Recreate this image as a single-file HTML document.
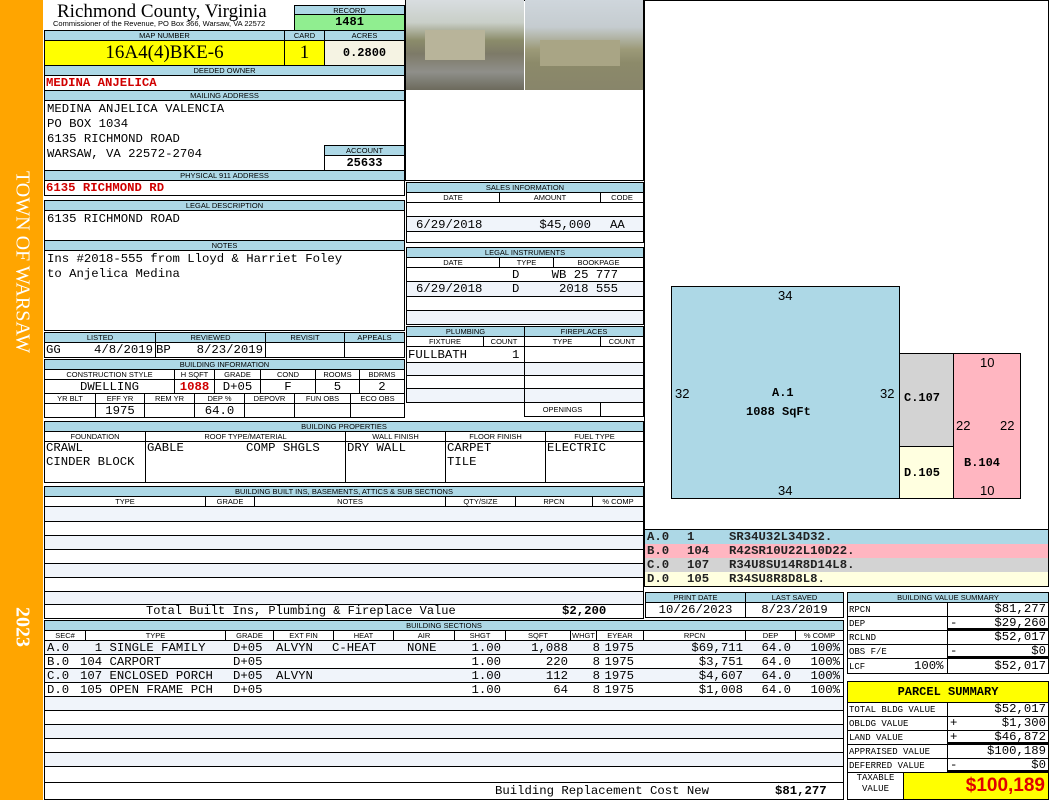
<!DOCTYPE html>
<html><head><meta charset="utf-8">
<style>
*{margin:0;padding:0;box-sizing:border-box}
body{width:1050px;height:800px;position:relative;background:#fff;overflow:hidden;font-family:"Liberation Mono",monospace;font-size:12.3px;color:#000}
div{position:absolute}
.h{background:#add8e6;border:1px solid #000;font:7.5px/9px "Liberation Sans",Arial,sans-serif;text-align:center;white-space:nowrap;overflow:hidden}
.b{border:1px solid #000}
.m{font-family:"Liberation Mono",monospace;font-size:12.3px;white-space:pre;line-height:14px}
.r{text-align:right}.c{text-align:center}
.alt{background:#f0f4fa}
.red{color:#d00000;font-weight:bold}
.sk{font:13px "Liberation Sans",Arial,sans-serif}
.sb{font:bold 12px "Liberation Mono",monospace}
.s9{font-size:9px}
</style></head><body>
<div style="left:0;top:0;width:43px;height:800px;background:#ffa500"></div>
<div style="left:22px;top:262px;transform:translate(-50%,-50%) rotate(90deg);color:#fff;font:20px 'Liberation Serif',serif;white-space:nowrap">TOWN OF WARSAW</div>
<div style="left:22px;top:627px;transform:translate(-50%,-50%) rotate(90deg);color:#fff;font:bold 20px 'Liberation Serif',serif;white-space:nowrap">2023</div>

<!-- title -->
<div style="left:57px;top:1px;font:19px 'Liberation Serif',serif;white-space:nowrap">Richmond County, Virginia</div>
<div style="left:53px;top:19px;font:7.5px 'Liberation Sans',sans-serif;white-space:nowrap">Commissioner of the Revenue, PO Box 366, Warsaw, VA 22572</div>
<div class="h" style="left:294px;top:5px;width:111px;height:10px">RECORD</div>
<div class="b" style="left:294px;top:14px;width:111px;height:17px;background:#90ee90;font:bold 12px 'Liberation Mono';text-align:center;line-height:15px">1481</div>
<div class="h" style="left:44px;top:30px;width:241px;height:11px">MAP NUMBER</div>
<div class="h" style="left:284px;top:30px;width:41px;height:11px">CARD</div>
<div class="h" style="left:324px;top:30px;width:81px;height:11px">ACRES</div>
<div class="b" style="left:44px;top:40px;width:241px;height:26px;background:#ffff00;font:19px 'Liberation Serif',serif;text-align:center;line-height:24px">16A4(4)BKE-6</div>
<div class="b" style="left:284px;top:40px;width:41px;height:26px;background:#ffff00;font:19px 'Liberation Serif',serif;text-align:center;line-height:24px">1</div>
<div class="b" style="left:324px;top:40px;width:81px;height:26px;background:#f5f3e3;font:bold 12px 'Liberation Mono';text-align:center;line-height:24px">0.2800</div>
<div class="h" style="left:44px;top:65px;width:361px;height:11px">DEEDED OWNER</div>
<div class="b" style="left:44px;top:75px;width:361px;height:16px"></div>
<div class="m red" style="left:46px;top:76px">MEDINA ANJELICA</div>
<div class="h" style="left:44px;top:90px;width:361px;height:11px">MAILING ADDRESS</div>
<div class="b" style="left:44px;top:100px;width:361px;height:71px"></div>
<div class="m" style="left:47px;top:102px;line-height:15px">MEDINA ANJELICA VALENCIA
PO BOX 1034
6135 RICHMOND ROAD
WARSAW, VA 22572-2704</div>
<div class="h" style="left:324px;top:145px;width:81px;height:11px">ACCOUNT</div>
<div class="b" style="left:324px;top:155px;width:81px;height:16px;font:bold 12px 'Liberation Mono';text-align:center;line-height:14px">25633</div>
<div class="h" style="left:44px;top:170px;width:361px;height:11px">PHYSICAL 911 ADDRESS</div>
<div class="b" style="left:44px;top:180px;width:361px;height:16px"></div>
<div class="m red" style="left:46px;top:181px">6135 RICHMOND RD</div>
<div class="h" style="left:44px;top:200px;width:361px;height:11px">LEGAL DESCRIPTION</div>
<div class="b" style="left:44px;top:210px;width:361px;height:31px"></div>
<div class="m" style="left:47px;top:212px">6135 RICHMOND ROAD</div>
<div class="h" style="left:44px;top:240px;width:361px;height:11px">NOTES</div>
<div class="b" style="left:44px;top:250px;width:361px;height:81px"></div>
<div class="m" style="left:47px;top:252px;line-height:15px">Ins #2018-555 from Lloyd &amp; Harriet Foley
to Anjelica Medina</div>

<!-- listed -->
<div class="h" style="left:44px;top:332px;width:112px;height:11px">LISTED</div>
<div class="h" style="left:155px;top:332px;width:111px;height:11px">REVIEWED</div>
<div class="h" style="left:265px;top:332px;width:80px;height:11px">REVISIT</div>
<div class="h" style="left:344px;top:332px;width:61px;height:11px">APPEALS</div>
<div class="b" style="left:44px;top:342px;width:112px;height:16px"></div>
<div class="b" style="left:155px;top:342px;width:111px;height:16px"></div>
<div class="b" style="left:265px;top:342px;width:80px;height:16px"></div>
<div class="b" style="left:344px;top:342px;width:61px;height:16px"></div>
<div class="m" style="left:46px;top:343px">GG</div>
<div class="m r" style="left:80px;top:343px;width:73px">4/8/2019</div>
<div class="m" style="left:156px;top:343px">BP</div>
<div class="m r" style="left:180px;top:343px;width:83px">8/23/2019</div>

<!-- building information -->
<div class="h" style="left:44px;top:359px;width:361px;height:11px">BUILDING INFORMATION</div>
<div class="h" style="left:44px;top:369px;width:131px;height:11px;background:#fff">CONSTRUCTION STYLE</div>
<div class="h" style="left:174px;top:369px;width:41px;height:11px;background:#fff">H SQFT</div>
<div class="h" style="left:214px;top:369px;width:47px;height:11px;background:#fff">GRADE</div>
<div class="h" style="left:260px;top:369px;width:56px;height:11px;background:#fff">COND</div>
<div class="h" style="left:315px;top:369px;width:45px;height:11px;background:#fff">ROOMS</div>
<div class="h" style="left:359px;top:369px;width:46px;height:11px;background:#fff">BDRMS</div>
<div class="b m c" style="left:44px;top:379px;width:131px;height:15px">DWELLING</div>
<div class="b m c red" style="left:174px;top:379px;width:41px;height:15px">1088</div>
<div class="b m c" style="left:214px;top:379px;width:47px;height:15px">D+05</div>
<div class="b m c" style="left:260px;top:379px;width:56px;height:15px">F</div>
<div class="b m c" style="left:315px;top:379px;width:45px;height:15px">5</div>
<div class="b m c" style="left:359px;top:379px;width:46px;height:15px">2</div>
<div class="h" style="left:44px;top:393px;width:52px;height:11px;background:#fff">YR BLT</div>
<div class="h" style="left:95px;top:393px;width:50px;height:11px;background:#fff">EFF YR</div>
<div class="h" style="left:144px;top:393px;width:51px;height:11px;background:#fff">REM YR</div>
<div class="h" style="left:194px;top:393px;width:51px;height:11px;background:#fff">DEP %</div>
<div class="h" style="left:244px;top:393px;width:51px;height:11px;background:#fff">DEPOVR</div>
<div class="h" style="left:294px;top:393px;width:57px;height:11px;background:#fff">FUN OBS</div>
<div class="h" style="left:350px;top:393px;width:55px;height:11px;background:#fff">ECO OBS</div>
<div class="b" style="left:44px;top:403px;width:52px;height:15px"></div>
<div class="b m c" style="left:95px;top:403px;width:50px;height:15px">1975</div>
<div class="b" style="left:144px;top:403px;width:51px;height:15px"></div>
<div class="b m c" style="left:194px;top:403px;width:51px;height:15px">64.0</div>
<div class="b" style="left:244px;top:403px;width:51px;height:15px"></div>
<div class="b" style="left:294px;top:403px;width:57px;height:15px"></div>
<div class="b" style="left:350px;top:403px;width:55px;height:15px"></div>

<!-- photos -->
<div class="b" style="left:405px;top:0;width:239px;height:181px"></div>
<div style="left:406px;top:0;width:118px;height:90px;background:linear-gradient(180deg,#d8dde0 0%,#c9cfc8 25%,#8b8c6a 45%,#7d7a68 60%,#8f8f8a 80%,#6c6a5c 100%)"></div>
<div style="left:425px;top:30px;width:60px;height:30px;background:#b8b49a"></div>
<div style="left:525px;top:0;width:118px;height:90px;background:linear-gradient(180deg,#cfd6dc 0%,#c5ccd0 30%,#9c9a78 55%,#8c8a6a 70%,#88856a 100%)"></div>
<div style="left:540px;top:40px;width:80px;height:26px;background:#a9a585"></div>

<!-- sales -->
<div class="h" style="left:406px;top:182px;width:238px;height:11px">SALES INFORMATION</div>
<div class="h" style="left:406px;top:192px;width:94px;height:11px;background:#fff">DATE</div>
<div class="h" style="left:499px;top:192px;width:102px;height:11px;background:#fff">AMOUNT</div>
<div class="h" style="left:600px;top:192px;width:44px;height:11px;background:#fff">CODE</div>
<div class="b" style="left:406px;top:202px;width:238px;height:15px"></div>
<div class="b alt" style="left:406px;top:216px;width:238px;height:16px"></div>
<div class="b" style="left:406px;top:231px;width:238px;height:12px"></div>
<div class="m" style="left:416px;top:218px">6/29/2018</div>
<div class="m r" style="left:520px;top:218px;width:71px">$45,000</div>
<div class="m" style="left:610px;top:218px">AA</div>
<div class="h" style="left:406px;top:247px;width:238px;height:11px">LEGAL INSTRUMENTS</div>
<div class="h" style="left:406px;top:257px;width:94px;height:11px;background:#fff">DATE</div>
<div class="h" style="left:499px;top:257px;width:55px;height:11px;background:#fff">TYPE</div>
<div class="h" style="left:553px;top:257px;width:91px;height:11px;background:#fff">BOOKPAGE</div>
<div class="b" style="left:406px;top:267px;width:238px;height:15px"></div>
<div class="b alt" style="left:406px;top:281px;width:238px;height:16px"></div>
<div class="b" style="left:406px;top:296px;width:238px;height:15px"></div>
<div class="b alt" style="left:406px;top:310px;width:238px;height:15px"></div>
<div class="m" style="left:512px;top:268px">D
D</div>
<div class="m r" style="left:540px;top:268px;width:78px">WB 25 777
2018 555</div>
<div class="m" style="left:416px;top:282px">6/29/2018</div>

<!-- plumbing -->
<div class="h" style="left:406px;top:326px;width:119px;height:11px">PLUMBING</div>
<div class="h" style="left:524px;top:326px;width:120px;height:11px">FIREPLACES</div>
<div class="h" style="left:406px;top:336px;width:78px;height:11px;background:#fff">FIXTURE</div>
<div class="h" style="left:483px;top:336px;width:42px;height:11px;background:#fff">COUNT</div>
<div class="h" style="left:524px;top:336px;width:77px;height:11px;background:#fff">TYPE</div>
<div class="h" style="left:600px;top:336px;width:44px;height:11px;background:#fff">COUNT</div>
<div class="b" style="left:406px;top:346px;width:119px;height:17px"></div>
<div class="b alt" style="left:406px;top:362px;width:119px;height:14px"></div>
<div class="b" style="left:406px;top:375px;width:119px;height:14px"></div>
<div class="b alt" style="left:406px;top:388px;width:119px;height:15px"></div>
<div class="b" style="left:524px;top:346px;width:120px;height:17px"></div>
<div class="b alt" style="left:524px;top:362px;width:120px;height:14px"></div>
<div class="b" style="left:524px;top:375px;width:120px;height:14px"></div>
<div class="b alt" style="left:524px;top:388px;width:120px;height:15px"></div>
<div class="b" style="left:524px;top:402px;width:77px;height:15px;font:7.5px/13px 'Liberation Sans';text-align:center">OPENINGS</div>
<div class="b" style="left:600px;top:402px;width:44px;height:15px"></div>
<div class="m" style="left:408px;top:348px">FULLBATH</div>
<div class="m" style="left:512px;top:348px">1</div>

<!-- building properties -->
<div class="h" style="left:44px;top:421px;width:600px;height:11px">BUILDING PROPERTIES</div>
<div class="h" style="left:44px;top:431px;width:102px;height:11px;background:#fff">FOUNDATION</div>
<div class="h" style="left:145px;top:431px;width:201px;height:11px;background:#fff">ROOF TYPE/MATERIAL</div>
<div class="h" style="left:345px;top:431px;width:101px;height:11px;background:#fff">WALL FINISH</div>
<div class="h" style="left:445px;top:431px;width:101px;height:11px;background:#fff">FLOOR FINISH</div>
<div class="h" style="left:545px;top:431px;width:99px;height:11px;background:#fff">FUEL TYPE</div>
<div class="b" style="left:44px;top:441px;width:102px;height:42px"></div>
<div class="b" style="left:145px;top:441px;width:201px;height:42px"></div>
<div class="b" style="left:345px;top:441px;width:101px;height:42px"></div>
<div class="b" style="left:445px;top:441px;width:101px;height:42px"></div>
<div class="b" style="left:545px;top:441px;width:99px;height:42px"></div>
<div class="m" style="left:46px;top:441px">CRAWL
CINDER BLOCK</div>
<div class="m" style="left:147px;top:441px">GABLE</div>
<div class="m" style="left:246px;top:441px">COMP SHGLS</div>
<div class="m" style="left:347px;top:441px">DRY WALL</div>
<div class="m" style="left:447px;top:441px">CARPET
TILE</div>
<div class="m" style="left:547px;top:441px">ELECTRIC</div>

<!-- built ins -->
<div class="h" style="left:44px;top:486px;width:600px;height:11px">BUILDING BUILT INS, BASEMENTS, ATTICS &amp; SUB SECTIONS</div>
<div class="h" style="left:44px;top:496px;width:162px;height:11px;background:#fff">TYPE</div>
<div class="h" style="left:205px;top:496px;width:50px;height:11px;background:#fff">GRADE</div>
<div class="h" style="left:254px;top:496px;width:192px;height:11px;background:#fff">NOTES</div>
<div class="h" style="left:445px;top:496px;width:71px;height:11px;background:#fff">QTY/SIZE</div>
<div class="h" style="left:515px;top:496px;width:78px;height:11px;background:#fff">RPCN</div>
<div class="h" style="left:592px;top:496px;width:52px;height:11px;background:#fff">% COMP</div>
<div class="b alt" style="left:44px;top:506px;width:600px;height:16px"></div>
<div class="b" style="left:44px;top:521px;width:600px;height:15px"></div>
<div class="b alt" style="left:44px;top:535px;width:600px;height:15px"></div>
<div class="b" style="left:44px;top:549px;width:600px;height:15px"></div>
<div class="b alt" style="left:44px;top:563px;width:600px;height:15px"></div>
<div class="b" style="left:44px;top:577px;width:600px;height:15px"></div>
<div class="b alt" style="left:44px;top:591px;width:600px;height:14px"></div>
<div class="b" style="left:44px;top:604px;width:600px;height:15px"></div>
<div class="m" style="left:146px;top:604px;font-size:12px">Total Built Ins, Plumbing &amp; Fireplace Value</div>
<div class="m" style="left:562px;top:604px;font-weight:bold">$2,200</div>

<!-- print date -->
<div class="h" style="left:645px;top:592px;width:101px;height:11px">PRINT DATE</div>
<div class="h" style="left:745px;top:592px;width:99px;height:11px">LAST SAVED</div>
<div class="b m c" style="left:645px;top:602px;width:101px;height:16px">10/26/2023</div>
<div class="b m c" style="left:745px;top:602px;width:99px;height:16px">8/23/2019</div>

<!-- building sections -->
<div class="h" style="left:44px;top:620px;width:800px;height:11px">BUILDING SECTIONS</div>
<div class="h" style="left:44px;top:630px;width:42px;height:11px;background:#fff">SEC#</div>
<div class="h" style="left:85px;top:630px;width:141px;height:11px;background:#fff">TYPE</div>
<div class="h" style="left:225px;top:630px;width:49px;height:11px;background:#fff">GRADE</div>
<div class="h" style="left:273px;top:630px;width:61px;height:11px;background:#fff">EXT FIN</div>
<div class="h" style="left:333px;top:630px;width:61px;height:11px;background:#fff">HEAT</div>
<div class="h" style="left:393px;top:630px;width:62px;height:11px;background:#fff">AIR</div>
<div class="h" style="left:454px;top:630px;width:52px;height:11px;background:#fff">SHGT</div>
<div class="h" style="left:505px;top:630px;width:66px;height:11px;background:#fff">SQFT</div>
<div class="h" style="left:570px;top:630px;width:27px;height:11px;background:#fff">WHGT</div>
<div class="h" style="left:596px;top:630px;width:48px;height:11px;background:#fff">EYEAR</div>
<div class="h" style="left:643px;top:630px;width:103px;height:11px;background:#fff">RPCN</div>
<div class="h" style="left:745px;top:630px;width:51px;height:11px;background:#fff">DEP</div>
<div class="h" style="left:795px;top:630px;width:49px;height:11px;background:#fff">% COMP</div>
<div class="b alt" style="left:44px;top:640px;width:800px;height:15px"></div>
<div class="b" style="left:44px;top:654px;width:800px;height:15px"></div>
<div class="b alt" style="left:44px;top:668px;width:800px;height:15px"></div>
<div class="b" style="left:44px;top:682px;width:800px;height:15px"></div>
<div class="b alt" style="left:44px;top:696px;width:800px;height:15px"></div>
<div class="b" style="left:44px;top:710px;width:800px;height:15px"></div>
<div class="b alt" style="left:44px;top:724px;width:800px;height:15px"></div>
<div class="b" style="left:44px;top:738px;width:800px;height:15px"></div>
<div class="b alt" style="left:44px;top:752px;width:800px;height:15px"></div>
<div class="b" style="left:44px;top:766px;width:800px;height:17px"></div>
<div class="b" style="left:44px;top:782px;width:800px;height:18px"></div>
<div class="m" style="left:47px;top:641px">A.0
B.0
C.0
D.0</div>
<div class="m" style="left:80px;top:641px">  1 SINGLE FAMILY
104 CARPORT
107 ENCLOSED PORCH
105 OPEN FRAME PCH</div>
<div class="m" style="left:233px;top:641px">D+05
D+05
D+05
D+05</div>
<div class="m" style="left:276px;top:641px">ALVYN

ALVYN</div>
<div class="m" style="left:332px;top:641px">C-HEAT</div>
<div class="m" style="left:407px;top:641px">NONE</div>
<div class="m r" style="left:440px;top:641px;width:61px">1.00
1.00
1.00
1.00</div>
<div class="m r" style="left:510px;top:641px;width:58px">1,088
220
112
64</div>
<div class="m r" style="left:580px;top:641px;width:20px">8
8
8
8</div>
<div class="m r" style="left:600px;top:641px;width:34px">1975
1975
1975
1975</div>
<div class="m r" style="left:660px;top:641px;width:83px">$69,711
$3,751
$4,607
$1,008</div>
<div class="m r" style="left:750px;top:641px;width:41px">64.0
64.0
64.0
64.0</div>
<div class="m r" style="left:800px;top:641px;width:40px">100%
100%
100%
100%</div>
<div class="m" style="left:495px;top:784px">Building Replacement Cost New</div>
<div class="m" style="left:775px;top:784px;font-weight:bold">$81,277</div>

<!-- sketch -->
<div class="b" style="left:644px;top:0;width:405px;height:530px"></div>
<div class="b" style="left:671px;top:286px;width:229px;height:213px;background:#add8e6"></div>
<div class="b" style="left:899px;top:353px;width:55px;height:94px;background:#d3d3d3"></div>
<div class="b" style="left:899px;top:446px;width:55px;height:53px;background:#ffffe0"></div>
<div class="b" style="left:953px;top:353px;width:68px;height:146px;background:#ffb6c1"></div>
<div class="sk" style="left:778px;top:288px">34</div>
<div class="sk" style="left:778px;top:483px">34</div>
<div class="sk" style="left:675px;top:386px">32</div>
<div class="sk" style="left:880px;top:386px">32</div>
<div class="sb" style="left:772px;top:386px">A.1</div>
<div class="sb" style="left:746px;top:405px">1088 SqFt</div>
<div class="sb" style="left:904px;top:391px">C.107</div>
<div class="sb" style="left:904px;top:466px">D.105</div>
<div class="sb" style="left:964px;top:456px">B.104</div>
<div class="sk" style="left:980px;top:355px">10</div>
<div class="sk" style="left:980px;top:483px">10</div>
<div class="sk" style="left:956px;top:418px">22</div>
<div class="sk" style="left:1000px;top:418px">22</div>

<div class="b" style="left:644px;top:529px;width:405px;height:58px"></div>
<div style="left:645px;top:530px;width:403px;height:14px;background:#add8e6"></div>
<div style="left:645px;top:544px;width:403px;height:14px;background:#ffb6c1"></div>
<div style="left:645px;top:558px;width:403px;height:14px;background:#d3d3d3"></div>
<div style="left:645px;top:572px;width:403px;height:14px;background:#ffffe0"></div>
<div class="m" style="left:647px;top:530px;font-weight:bold;color:#222">A.0
B.0
C.0
D.0</div>
<div class="m" style="left:687px;top:530px;font-weight:bold;color:#222">1
104
107
105</div>
<div class="m" style="left:729px;top:530px;font-weight:bold;color:#222">SR34U32L34D32.
R42SR10U22L10D22.
R34U8SU14R8D14L8.
R34SU8R8D8L8.</div>

<!-- building value summary -->
<div class="h" style="left:847px;top:592px;width:202px;height:11px">BUILDING VALUE SUMMARY</div>
<div class="b" style="left:847px;top:602px;width:101px;height:15px"></div><div class="b" style="left:947px;top:602px;width:102px;height:15px"></div>
<div class="b" style="left:847px;top:616px;width:101px;height:15px"></div><div class="b" style="left:947px;top:616px;width:102px;height:15px;border-bottom:3px solid #000"></div>
<div class="b" style="left:847px;top:630px;width:101px;height:15px"></div><div class="b" style="left:947px;top:630px;width:102px;height:15px"></div>
<div class="b" style="left:847px;top:644px;width:101px;height:15px"></div><div class="b" style="left:947px;top:644px;width:102px;height:15px;border-bottom:3px solid #000"></div>
<div class="b" style="left:847px;top:658px;width:101px;height:16px"></div><div class="b" style="left:947px;top:658px;width:102px;height:16px"></div>
<div class="m s9" style="left:849px;top:603px">RPCN</div>
<div class="m s9" style="left:849px;top:617px">DEP</div>
<div class="m s9" style="left:849px;top:631px">RCLND</div>
<div class="m s9" style="left:849px;top:645px">OBS F/E</div>
<div class="m s9" style="left:849px;top:660px">LCF</div>
<div class="m" style="left:914px;top:659px">100%</div>
<div class="m" style="left:950px;top:616px">-</div>
<div class="m" style="left:950px;top:644px">-</div>
<div class="m r" style="left:950px;top:602px;width:96px">$81,277</div>
<div class="m r" style="left:950px;top:616px;width:96px">$29,260</div>
<div class="m r" style="left:950px;top:630px;width:96px">$52,017</div>
<div class="m r" style="left:950px;top:644px;width:96px">$0</div>
<div class="m r" style="left:950px;top:659px;width:96px">$52,017</div>

<!-- parcel summary -->
<div class="b" style="left:847px;top:681px;width:202px;height:22px;background:#ffff00;font:bold 12px/20px 'Liberation Mono';text-align:center">PARCEL SUMMARY</div>
<div class="b" style="left:847px;top:702px;width:101px;height:15px"></div><div class="b" style="left:947px;top:702px;width:102px;height:15px"></div>
<div class="b" style="left:847px;top:716px;width:101px;height:15px"></div><div class="b" style="left:947px;top:716px;width:102px;height:15px"></div>
<div class="b" style="left:847px;top:730px;width:101px;height:15px"></div><div class="b" style="left:947px;top:730px;width:102px;height:15px;border-bottom:3px solid #000"></div>
<div class="b" style="left:847px;top:744px;width:101px;height:15px"></div><div class="b" style="left:947px;top:744px;width:102px;height:15px"></div>
<div class="b" style="left:847px;top:758px;width:101px;height:15px"></div><div class="b" style="left:947px;top:758px;width:102px;height:15px;border-bottom:3px solid #000"></div>
<div class="b" style="left:847px;top:772px;width:57px;height:28px"></div>
<div class="b" style="left:903px;top:772px;width:146px;height:28px;background:#ffff00;color:#e00000;font:bold 19px/26px 'Liberation Sans',Arial;text-align:right;padding-right:3px">$100,189</div>
<div class="m s9" style="left:849px;top:703px">TOTAL BLDG VALUE</div>
<div class="m s9" style="left:849px;top:717px">OBLDG VALUE</div>
<div class="m s9" style="left:849px;top:731px">LAND VALUE</div>
<div class="m s9" style="left:849px;top:745px">APPRAISED VALUE</div>
<div class="m s9" style="left:849px;top:759px">DEFERRED VALUE</div>
<div class="m c s9" style="left:847px;top:773px;width:57px;line-height:11px">TAXABLE
VALUE</div>
<div class="m" style="left:950px;top:716px">+</div>
<div class="m" style="left:950px;top:730px">+</div>
<div class="m" style="left:950px;top:758px">-</div>
<div class="m r" style="left:950px;top:702px;width:96px">$52,017</div>
<div class="m r" style="left:950px;top:716px;width:96px">$1,300</div>
<div class="m r" style="left:950px;top:730px;width:96px">$46,872</div>
<div class="m r" style="left:950px;top:744px;width:96px">$100,189</div>
<div class="m r" style="left:950px;top:758px;width:96px">$0</div>
</body></html>
